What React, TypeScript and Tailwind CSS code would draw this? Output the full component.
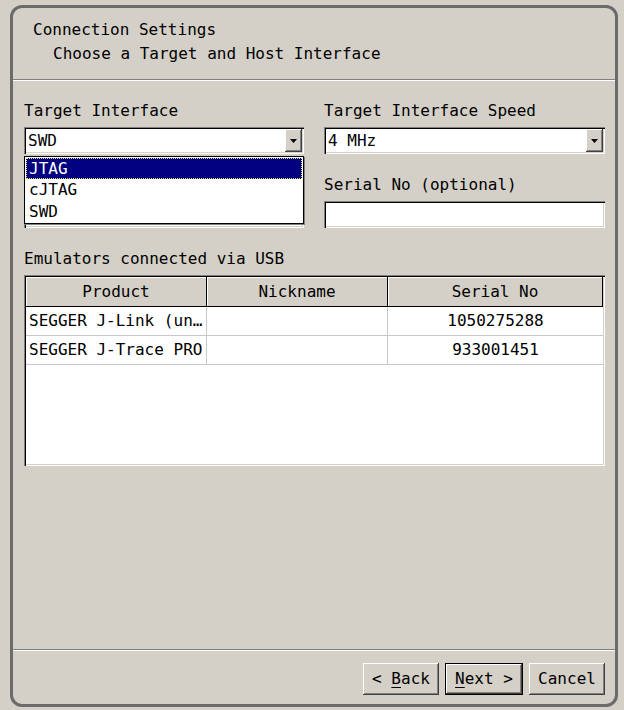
import React from "react"

const font = "font-['DejaVu_Sans_Mono','Liberation_Mono',monospace]"

const sunken =
  "shadow-[inset_1px_1px_0_#808080,inset_2px_2px_0_#000000,inset_-1px_-1px_0_#ffffff,inset_-2px_-2px_0_#d4d0c8]"
const raised =
  "shadow-[inset_-1px_-1px_0_#404040,inset_1px_1px_0_#ffffff,inset_-2px_-2px_0_#808080]"

function Arrow(){
  return(
    <div className={`w-[17px] h-[23px] bg-[#d4d0c8] flex items-center justify-center ${raised}`}>
      <svg width="7" height="4" viewBox="0 0 7 4">
        <path d="M0 0h7L3.5 4z" fill="#000" />
      </svg>
    </div>
  )
}

function Combo({value}:{value:string}){
  return(
    <div className={`h-[27px] bg-white flex items-center pl-[4px] pr-[2px] ${sunken}`}>
      <div className="flex-1 leading-none">{value}</div>
      <Arrow/>
    </div>
  )
}

function Btn({label,u,rest,pre,def}:{label?:string,u?:string,rest?:string,pre?:string,def?:boolean}){
  return(
    <div className={`h-[32px] flex items-center justify-center bg-[#d4d0c8] ${def ? "w-[78px] border border-black" : "w-[76px]"}`}>
      <div className={`w-full h-full flex items-center justify-center ${raised}`}>
        {label ? label : (
          <span>{pre}<span className="underline underline-offset-[3px]">{u}</span>{rest}</span>
        )}
      </div>
    </div>
  )
}

export default function App(){

  const rows = [
    { product:"SEGGER J-Link (un…", nick:"", serial:"1050275288" },
    { product:"SEGGER J-Trace PRO", nick:"", serial:"933001451" }
  ]

  return(

<div className={`w-[624px] h-[710px] bg-[#d4d0c8] pt-[5px] pl-[10px] text-[16px] text-black ${font}`}>

  <div className="w-[608px] h-[702px] rounded-[12px] border-[3px] border-[#6b6b6b] flex flex-col">

    <div className="h-[72px] pl-[20px] pt-[10px] leading-[24px] border-b border-[#808080]">
      <div>Connection Settings</div>
      <div className="pl-[20px]">Choose a Target and Host Interface</div>
    </div>
    <div className="h-px bg-white"></div>

    <div className="flex-1 flex flex-col pl-[11px] pr-[10px] pt-[20px]">

      <div className="flex gap-[20px]">

        <div className="w-[280px] relative">
          <div className="leading-[20px] mb-[6px]">Target Interface</div>
          <Combo value="SWD"/>
          <div className="h-[20px] mt-[21px] mb-[6px]"></div>
          <div className={`h-[27px] bg-white ${sunken}`}></div>

          <div className="absolute left-0 top-[55px] w-[280px] h-[68px] bg-white border border-black shadow-[1px_1px_0_#808080] pt-px px-px">
            <div className="h-[21px] bg-[#000080] text-white flex items-center pl-[3px] outline-1 outline-dotted outline-[#e0e070] -outline-offset-1">JTAG</div>
            <div className="h-[22px] flex items-center pl-[3px]">cJTAG</div>
            <div className="h-[22px] flex items-center pl-[3px]">SWD</div>
          </div>
        </div>

        <div className="w-[281px]">
          <div className="leading-[20px] mb-[6px]">Target Interface Speed</div>
          <Combo value="4 MHz"/>
          <div className="leading-[20px] mt-[21px] mb-[6px]">Serial No (optional)</div>
          <div className={`h-[27px] bg-white ${sunken}`}></div>
        </div>

      </div>

      <div className="leading-[20px] mt-[21px] mb-[6px]">Emulators connected via USB</div>

      <div className={`h-[191px] w-[581px] bg-white p-[2px] ${sunken}`}>
        <div className="flex h-[30px] bg-[#d4d0c8]">
          <div className="w-[181px] flex items-center justify-center border-r border-b border-black shadow-[inset_1px_1px_0_#ffffff]">Product</div>
          <div className="w-[181px] flex items-center justify-center border-r border-b border-black shadow-[inset_1px_1px_0_#ffffff]">Nickname</div>
          <div className="flex-1 flex items-center justify-center border-r border-b border-black shadow-[inset_1px_1px_0_#ffffff]">Serial No</div>
        </div>
        {rows.map(r=>(
          <div key={r.serial} className="flex h-[29px] border-b border-[#c8c8c8]">
            <div className="w-[181px] flex items-center pl-[3px] border-r border-[#c8c8c8] whitespace-nowrap">{r.product}</div>
            <div className="w-[181px] border-r border-[#c8c8c8]">{r.nick}</div>
            <div className="flex-1 flex items-center justify-center">{r.serial}</div>
          </div>
        ))}
      </div>

      <div className="flex-1"></div>

    </div>

    <div className="h-px bg-[#808080]"></div>
    <div className="h-px bg-white"></div>

    <div className="h-[53px] flex justify-end items-start pt-[12px] pr-[10px] gap-[6px]">
      <Btn pre="< " u="B" rest="ack"/>
      <Btn u="N" rest="ext >" def/>
      <Btn label="Cancel"/>
    </div>

  </div>

</div>

  )
}
